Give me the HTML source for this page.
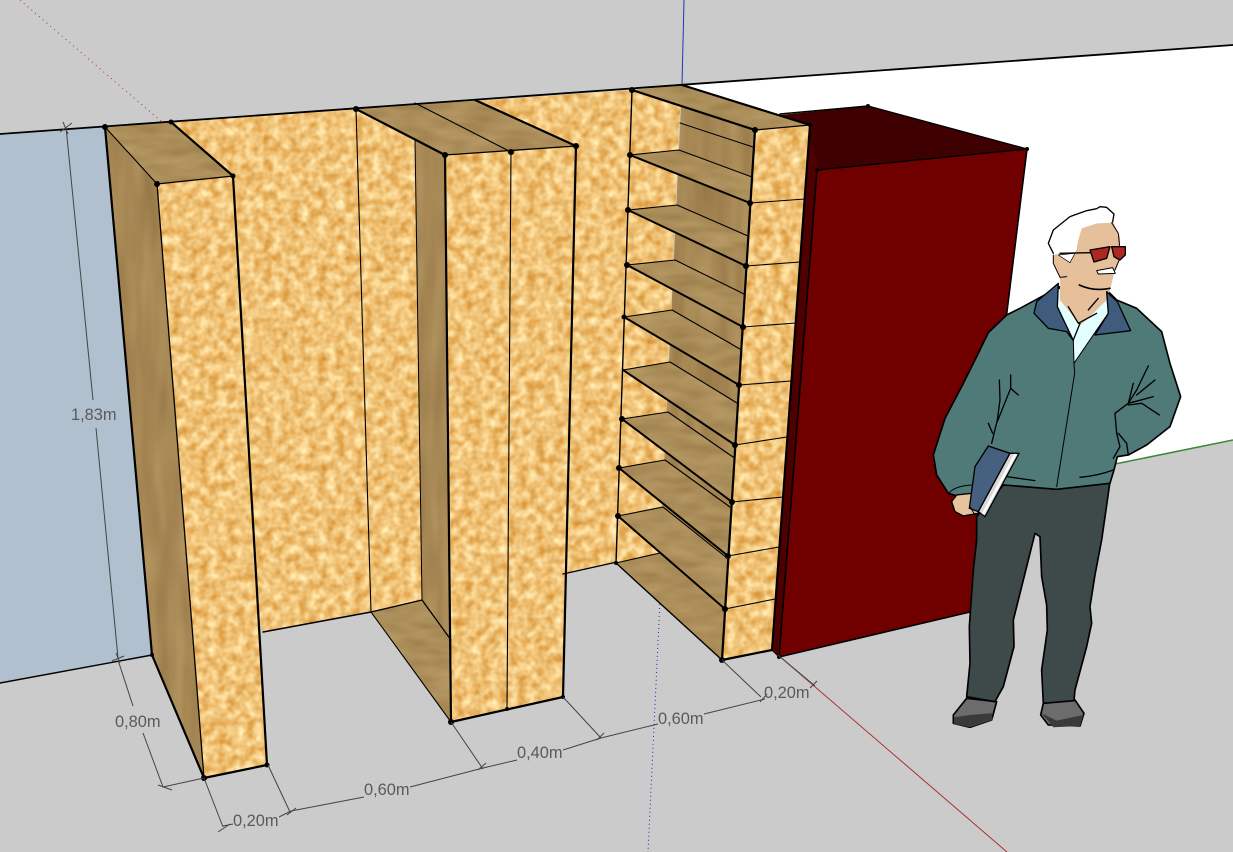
<!DOCTYPE html>
<html><head><meta charset="utf-8"><style>
html,body{margin:0;padding:0;background:#cbcbcb;width:1233px;height:852px;overflow:hidden}
svg{display:block}
text{font-family:"Liberation Sans",sans-serif;font-size:16.4px;fill:#5a5a5a}
</style></head><body>
<svg width="1233" height="852" viewBox="0 0 1233 852" xmlns="http://www.w3.org/2000/svg">
<defs>
<filter id="cork" filterUnits="userSpaceOnUse" x="0" y="0" width="1233" height="852" color-interpolation-filters="sRGB">
<feTurbulence type="fractalNoise" baseFrequency="0.11" numOctaves="2" seed="4"/>
<feColorMatrix values="0.25 0 0 0 0.815  0.5 0 0 0 0.515  0.7 0 0 0 0.12  0 0 0 0 1"/>
<feComposite in2="SourceGraphic" operator="in"/>
</filter>
<filter id="wood" filterUnits="userSpaceOnUse" x="0" y="0" width="1233" height="852" color-interpolation-filters="sRGB">
<feTurbulence type="fractalNoise" baseFrequency="0.03 0.09" numOctaves="2" seed="7"/>
<feColorMatrix values="0.16 0 0 0 0.59  0.16 0 0 0 0.475  0.14 0 0 0 0.28  0 0 0 0 1"/>
<feComposite in2="SourceGraphic" operator="in"/>
</filter>
<filter id="woodd" filterUnits="userSpaceOnUse" x="0" y="0" width="1233" height="852" color-interpolation-filters="sRGB">
<feTurbulence type="fractalNoise" baseFrequency="0.07 0.012" numOctaves="2" seed="3"/>
<feColorMatrix values="0.16 0 0 0 0.57  0.16 0 0 0 0.45  0.14 0 0 0 0.26  0 0 0 0 1"/>
<feComposite in2="SourceGraphic" operator="in"/>
</filter>
</defs>

<!-- environment -->
<rect width="1233" height="852" fill="#cbcbcb"/>
<polygon points="683,85 1233,45 1233,440 683,548" fill="#fff"/>
<polygon points="0,135 105,127 152,655 0,683" fill="#b0c0cf"/>

<!-- axes -->
<line x1="20" y1="0" x2="162" y2="122" stroke="#a33" stroke-width="1" stroke-dasharray="1 4"/>
<line x1="684" y1="0" x2="682" y2="85" stroke="#2233bb" stroke-width="1"/>
<line x1="660" y1="600" x2="648" y2="852" stroke="#223399" stroke-width="1" stroke-dasharray="1 3"/>
<line x1="778" y1="655" x2="1007" y2="852" stroke="#b03030" stroke-width="1"/>
<line x1="1115" y1="464" x2="1233" y2="440" stroke="#3a8a3a" stroke-width="1.5"/>

<!-- cork back wall -->
<g filter="url(#cork)">
<polygon points="105,127 632,90 682,85 680,108 660,553 616,563 563,574 563,400 263,632 200,400"/>
<polygon points="200,130 620,95 616,563 263,632"/>
</g>

<!-- red box -->
<polygon points="780,115 868,106 1027,149 817,170 800,170" fill="#3e0000"/>
<polygon points="805,125 820,170 779,657 771,650" fill="#4e0000"/>
<polygon points="817,170 1027,149 970,612 779,657" fill="#700000"/>

<!-- left box wood -->
<polygon filter="url(#woodd)" points="105,127 157,184 204,778 152,655"/>
<polygon filter="url(#wood)" points="105,127 171,122 233,176 157,184"/>
<polygon filter="url(#cork)" points="157,184 233,176 267,765 204,778"/>

<!-- middle box -->
<polygon filter="url(#woodd)" points="415,140 445,155 451,640 422,600"/>
<polygon filter="url(#wood)" points="371,612 422,600 451,640 451,722"/>
<polygon filter="url(#wood)" points="356,109 475,100 576,146 445,155"/>
<polygon filter="url(#cork)" points="445,155 576,146 563,697 451,722"/>

<!-- shelf unit -->
<polygon filter="url(#woodd)" points="681,107 755,130 722,660 660,553"/>
<g filter="url(#wood)">
<polygon points="632,90 682,85 810,125 755,130"/>
<polygon points="630,155 679,150 752,177 750,203"/>
<polygon points="628,210 677,205 748,236 746,266"/>
<polygon points="627,265 675,260 744,294 743,327"/>
<polygon points="624,317 672,310 740,349 739,385"/>
<polygon points="623,370 670,362 737,403 735,445"/>
<polygon points="622,419 668,412 733,457 732,502"/>
<polygon points="619,468 665,460 730,507 728,556"/>
<polygon points="618,516 663,507 727,558 725,609"/>
<polygon points="616,563 660,553 724,608 722,660"/>
</g>
<polygon filter="url(#cork)" points="755,130 810,125 772,650 722,660"/>

<!-- edges -->
<g fill="none" stroke="#000" stroke-linecap="round" stroke-linejoin="round">
<path d="M0,134L1233,45" stroke-width="1.8"/>
<path d="M0,683L152,655M263,632L371,612M563,574L617,562" stroke-width="1.4"/>
<g stroke-width="2.2">
<path d="M105,127L152,655L204,778L267,765L233,176L171,122"/>
<path d="M157,184L204,778" stroke-width="1.3"/>
<path d="M157,184L233,176" stroke-width="1.3"/>
<path d="M105,127L157,184" stroke-width="1.1"/>
<path d="M356,109L445,155L451,722L563,697L576,146L475,100"/>
<path d="M445,155L576,146" stroke-width="1.3"/>
<path d="M415,103L511,152L507,709" stroke-width="1.1"/>
<path d="M356,109L371,612L451,722" stroke-width="1.1"/>
<path d="M371,612L422,600L451,640" stroke-width="1.3"/>
<path d="M415,140L422,600" stroke-width="1"/>
<path d="M632,90L755,130L722,660L772,650M682,85L810,125L772,650"/>
<path d="M755,130L810,125" stroke-width="1.2"/>
<path d="M632,90L616,563L722,660" stroke-width="1.4"/>
<path d="M680,123L753,147" stroke-width="1"/>
<path d="M630,155L750,203M628,210L746,266M627,265L743,327M624,317L739,385M623,370L735,445M622,419L732,502M619,468L728,556M618,516L725,609" stroke-width="2"/>
<path d="M630,155L679,150L752,177M628,210L677,205L748,236M627,265L675,260L744,294M624,317L672,310L740,349M623,370L670,362L737,403M622,419L668,412L733,457M619,468L665,460L730,507M618,516L663,507L727,558M616,563L660,553L724,608" stroke-width="1.1"/>
<path d="M750,203L805,199M746,266L800,262M743,327L796,323M739,385L791,381M735,445L787,437M732,502L783,497M728,556L779,547M725,609L775,599" stroke-width="1.1"/>
<path d="M817,170L1027,149L868,106L780,114" stroke-width="1.4"/>
<path d="M1027,149L970,612L779,657L817,170" stroke-width="1.6"/>
<path d="M772,650L779,657" stroke-width="1"/>
</g>
</g>

<!-- nodes -->
<g fill="#000">
<circle cx="105" cy="127" r="3"/><circle cx="171" cy="122" r="2.5"/><circle cx="157" cy="184" r="3"/><circle cx="233" cy="176" r="2.5"/><circle cx="204" cy="778" r="3"/><circle cx="267" cy="765" r="2.5"/><circle cx="152" cy="655" r="2"/>
<circle cx="356" cy="109" r="3"/><circle cx="445" cy="155" r="3"/><circle cx="511" cy="152" r="3"/><circle cx="576" cy="146" r="3"/><circle cx="451" cy="722" r="3"/><circle cx="507" cy="709" r="2"/><circle cx="563" cy="697" r="2"/>
<circle cx="632" cy="90" r="3"/><circle cx="755" cy="130" r="3"/><circle cx="810" cy="125" r="2"/><circle cx="722" cy="660" r="3"/>
<circle cx="630" cy="155" r="3"/><circle cx="628" cy="210" r="3"/><circle cx="627" cy="265" r="3"/><circle cx="624" cy="317" r="2.5"/><circle cx="622" cy="419" r="3"/><circle cx="619" cy="468" r="3"/><circle cx="618" cy="516" r="3"/><circle cx="616" cy="563" r="2"/>
<circle cx="750" cy="203" r="3"/><circle cx="746" cy="266" r="3"/><circle cx="743" cy="327" r="3"/><circle cx="739" cy="385" r="3"/><circle cx="735" cy="445" r="3"/><circle cx="732" cy="502" r="3"/><circle cx="728" cy="556" r="3"/><circle cx="725" cy="609" r="3"/>
<circle cx="817" cy="170" r="2"/><circle cx="1027" cy="149" r="2"/><circle cx="868" cy="106" r="2"/><circle cx="779" cy="657" r="2"/>
</g>

<!-- dimensions -->
<g fill="none" stroke="#444" stroke-width="1">
<path d="M66,127L93,400M96,428L118,658"/>
<path d="M60,132L72,123M63,122L68,134M112,661L124,656M116,653L120,663"/>
<path d="M118,660L133,706M143,733L163,787"/>
<path d="M158,785L172,790M163,787L204,778"/>
<path d="M204,778L223,827M218,832L230,824M223,826L233,824"/>
<path d="M268,765L290,812M287,815L296,808M279,817L291,811"/>
<path d="M291,811L364,797M410,787L483,768M451,722L483,769M478,770L486,763"/>
<path d="M483,768L517,760M563,750L601,738M563,697L601,738M597,740L604,733"/>
<path d="M601,738L658,724M704,714L765,699M722,660L761,697M760,702L767,694"/>
<path d="M778,655L815,686M810,688L817,681"/>
</g>
<text x="71" y="420">1,83m</text>
<text x="115" y="727">0,80m</text>
<text x="233" y="826">0,20m</text>
<text x="364" y="795">0,60m</text>
<text x="517" y="758">0,40m</text>
<text x="658" y="724">0,60m</text>
<text x="764" y="698">0,20m</text>

<!-- person: pants/shoes -->
<g transform="translate(940,480) scale(.3333)" stroke="#000" stroke-linejoin="round">
<path d="M80,655L40,705L40,730L90,742L155,720L170,665Z" fill="#6c6c6c" stroke-width="5"/>
<path d="M42,712L90,705L155,700L158,720L90,742L42,732Z" fill="#3a3a3a" stroke="none"/>
<path d="M310,670L302,705L325,735L420,738L432,700L405,660Z" fill="#6c6c6c" stroke-width="5"/>
<path d="M305,700L350,722L430,705L420,738L340,742Z" fill="#3a3a3a" stroke="none"/>
<path d="M110,110L190,15L510,5L498,90L485,180L465,285L450,380L455,430L440,500L405,630L402,662L310,670L305,570L322,450L320,375L305,290L300,170L285,160L265,240L220,420L222,500L190,620L165,665L80,650L90,550L88,440L100,270L110,180Z" fill="#3e4a4a" stroke-width="5"/>
</g>

<!-- person: upper body -->
<g transform="translate(920,200) scale(.3333)" stroke="#000" stroke-linejoin="round" stroke-linecap="round">
<!-- jacket -->
<path d="M350,298L300,325L260,345L205,398L165,480L130,550L75,655L40,765L50,825L85,880L150,900L170,860L250,855L410,868L570,850L582,810L592,770L625,765L680,735L750,680L782,590L750,490L725,395L650,325L590,300L560,270L420,260Z" fill="#4f7a78" stroke-width="5"/>
<!-- hand -->
<path d="M95,905L110,885L155,880L175,940L130,948L105,935Z" fill="#e8c49c" stroke-width="4"/>
<path d="M85,880Q105,858 155,855" fill="none" stroke-width="3"/>
<!-- shirt -->
<path d="M412,265L410,320L460,420L462,490L530,390L565,340L565,280Z" fill="#e4ffff" stroke-width="3"/>
<!-- face -->
<path d="M477,85L530,70L580,68L600,110L600,170L585,210L570,270L560,300L500,360L480,375L440,325L420,300L420,235L400,190L400,165L470,150Z" fill="#e5c09a" stroke="none"/>
<!-- collar -->
<path d="M415,250L350,305L342,340L385,385L440,395L460,422L412,320Z" fill="#3f5c7d" stroke-width="4"/>
<path d="M560,275L592,305L632,392L525,405L565,340Z" fill="#3f5c7d" stroke-width="4"/>
<!-- hair -->
<path d="M530,22L560,20L582,42L575,68L530,70L485,85L475,120L465,160L400,160L385,130L400,90L450,50Z" fill="#fff" stroke="none"/>
<path d="M530,26L540,20L560,22L582,42L578,66M530,26L500,32L450,50L400,90L385,130L400,160" fill="none" stroke-width="4"/>
<path d="M575,68L595,100L602,170L585,210" fill="none" stroke-width="3"/>
<path d="M400,165L400,190L420,232L440,230" fill="none" stroke-width="3"/>
<path d="M478,255Q520,275 570,265" fill="none" stroke-width="5"/>
<path d="M415,165L465,160L450,188Z" fill="#fff" stroke-width="2"/>
<!-- glasses -->
<path d="M420,160L510,158" fill="none" stroke-width="4"/>
<path d="M510,150L570,140L560,175L522,186Z" fill="#ab2823" stroke-width="4"/>
<path d="M575,140L616,140L616,165L600,180L582,170Z" fill="#ab2823" stroke-width="4"/>
<path d="M530,212L578,203L586,220L535,222Z" fill="#fff" stroke-width="3"/>
<path d="M505,330L535,295M445,320L475,370L530,340M460,420L480,370" fill="none" stroke-width="4"/>
<!-- jacket folds -->
<path d="M462,490L464,520L410,860" fill="none" stroke-width="3"/>
<path d="M238,540L240,600L232,660L215,730M205,670L218,700M272,525L272,565L232,665M272,565L295,585" fill="none" stroke-width="4"/>
<path d="M685,498L650,570L625,610L585,640L590,700L600,740L580,775M640,550L625,610M705,540L650,585M625,610L700,590M625,615L665,610L718,645M595,700L620,730L625,765" fill="none" stroke-width="4"/>
<path d="M260,830L345,842M480,832Q530,828 580,810" fill="none" stroke-width="4"/>
<!-- book -->
<path d="M205,738L270,760L175,935L148,925L165,800Z" fill="#46617f" stroke-width="4"/>
<path d="M270,760L297,760L195,950L175,935Z" fill="#d8d8d8" stroke-width="4"/>
<path d="M285,765L190,940" stroke="#fff" stroke-width="7" fill="none"/>
<path d="M150,920L165,945" stroke-width="3" fill="none"/>
</g>
</svg>
</body></html>
